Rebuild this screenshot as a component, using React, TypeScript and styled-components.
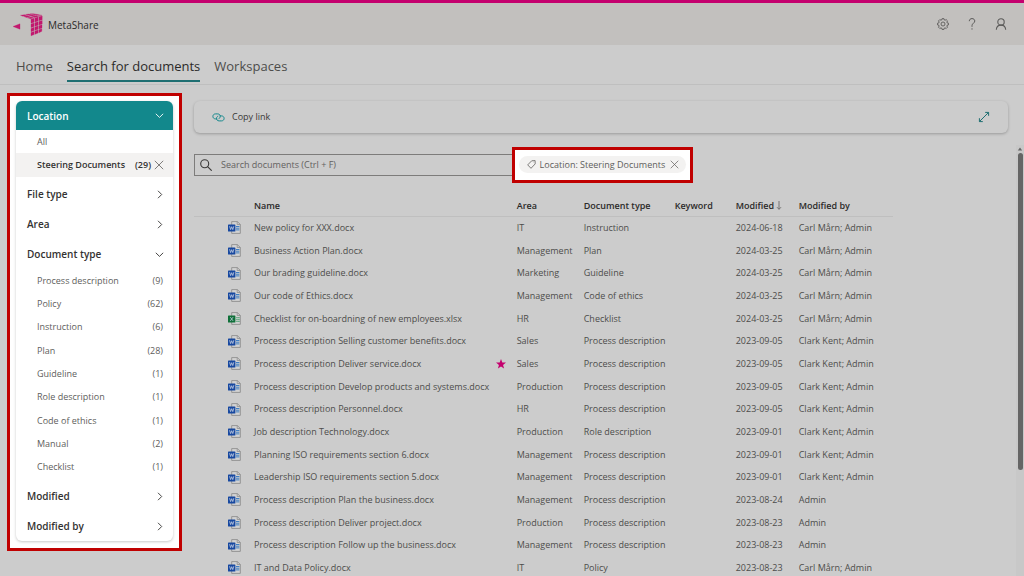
import React, { useState } from 'react';
import styled, { createGlobalStyle, css } from 'styled-components';

const color = {
  page: '#cccccc',
  header: '#c2c0be',
  line: '#bfbfbf',
  magenta: '#c4006e',
  teal: '#12888c',
  tealDark: '#1f6f72',
  text: '#4d4c4b',
  strong: '#2b2a29',
  frame: '#c00000',
};

const GlobalStyle = createGlobalStyle`
  *, *::before, *::after { box-sizing: border-box; }
  body {
    margin: 0;
    background: ${color.page};
    color: ${color.text};
    font-family: 'Open Sans', 'Noto Sans', sans-serif;
    font-size: 9px;
    line-height: 12px;
  }
  button, input { font: inherit; color: inherit; }
  button { border: 0; padding: 0; background: none; text-align: left; }
  a { color: inherit; text-decoration: none; }
  ul { list-style: none; margin: 0; padding: 0; }
  svg { display: block; flex: none; }
`;

const Page = styled.div`
  display: flex;
  flex-direction: column;
  height: 100vh;
  overflow: hidden;
`;

const SuiteBar = styled.header`
  display: flex;
  align-items: center;
  flex: none;
  height: 45px;
  padding: 0 17px 0 13px;
  border-top: 3px solid ${color.magenta};
  background: ${color.header};
`;

const Brand = styled.a`
  display: flex;
  align-items: center;
  gap: 5px;
  padding-top: 2px;
  color: ${color.strong};
  font-size: 10px;
`;

const SuiteActions = styled.div`
  display: flex;
  gap: 17px;
  margin-left: auto;
`;

const IconButton = styled.button`
  display: flex;
`;

const TopNav = styled.nav`
  display: flex;
  align-items: flex-start;
  gap: 14px;
  flex: none;
  height: 40px;
  padding: 12px 16px 0;
  border-bottom: 1px solid ${color.line};
`;

const NavLink = styled.a<{ $current?: boolean }>`
  padding-bottom: 5px;
  border-bottom: 2px solid transparent;
  font-size: 13px;
  line-height: 18px;
  ${(p) =>
    p.$current &&
    css`
      border-color: ${color.tealDark};
      color: ${color.strong};
    `}
`;

const Body = styled.div`
  display: flex;
  align-items: stretch;
  flex: 1;
  min-height: 0;
`;

const SideFrame = styled.aside`
  align-self: flex-start;
  flex: none;
  width: 175px;
  margin: 8px 12px 0 7px;
  padding: 5px 6px 7px;
  border: 3px solid ${color.frame};
  background: #fff;
`;

const FilterPanel = styled.div`
  overflow: hidden;
  border-radius: 6px;
  background: #fff;
  box-shadow: 0 1px 3px rgba(0, 0, 0, 0.22);
`;

const SectionHead = styled.button<{ $active?: boolean }>`
  display: flex;
  align-items: center;
  justify-content: space-between;
  width: 100%;
  height: 30px;
  padding: 0 9px 0 11px;
  color: #333231;
  font-size: 10px;
  font-weight: 600;
  ${(p) =>
    p.$active &&
    css`
      height: 29px;
      background: ${color.teal};
      color: #fff;
    `}
`;

const OptionList = styled.ul`
  display: flex;
  flex-direction: column;
  && { padding-bottom: 2px; }
`;

const OptionItem = styled.li<{ $selected?: boolean }>`
  display: flex;
  align-items: center;
  gap: 3px;
  height: 23px;
  padding: 0 ${(p) => (p.$selected ? 9 : 10)}px 0 21px;
  color: #605e5c;
  &:nth-child(3n) { height: 24px; }
  ${(p) =>
    p.$selected &&
    css`
      height: 24px;
      background: #f3f2f1;
      color: #333231;
      font-weight: 600;
    `}
`;

const OptionButton = styled.button`
  display: flex;
  flex: 1;
  justify-content: space-between;
  white-space: nowrap;
`;

const Main = styled.main`
  display: flex;
  flex-direction: column;
  flex: 1;
  min-width: 0;
  padding-top: 16px;
`;

const CommandBar = styled.div`
  display: flex;
  align-items: center;
  justify-content: space-between;
  flex: none;
  height: 32px;
  margin-right: 16px;
  padding: 0 18px;
  border-radius: 6px;
  box-shadow: 0 1px 3px rgba(0, 0, 0, 0.25);
`;

const Command = styled.button`
  display: flex;
  align-items: center;
  gap: 7px;
  color: #3a3938;
`;

const ScrollArea = styled.div`
  display: flex;
  flex: 1;
  min-height: 0;
  margin-top: 12px;
`;

const Results = styled.section`
  flex: 1;
  min-width: 0;
  overflow: hidden;
  padding-top: 2px;
`;

const ScrollTrack = styled.div`
  display: flex;
  flex-direction: column;
  align-items: center;
  flex: none;
  width: 8px;
  padding-top: 2px;
  background: #c8c8c8;
`;

const ScrollThumb = styled.div`
  width: 5px;
  height: 74%;
  margin-top: 2px;
  border-radius: 3px;
  background: #656565;
`;

const SearchRow = styled.div`
  display: flex;
  align-items: center;
`;

const SearchBox = styled.label`
  display: flex;
  align-items: center;
  gap: 9px;
  width: 39%;
  height: 22px;
  padding: 0 5px;
  border: 1px solid #7d7c7b;
  border-right: 0;
`;

const SearchInput = styled.input`
  flex: 1;
  min-width: 0;
  padding: 0;
  border: 0;
  outline: 0;
  background: transparent;
  &::placeholder { color: #63615f; opacity: 1; }
`;

const ChipFrame = styled.div`
  display: flex;
  align-items: flex-start;
  height: 36px;
  margin-left: -3px;
  padding: 6px 4px;
  border: 3px solid ${color.frame};
  background: #fff;
`;

const Chip = styled.div`
  display: flex;
  align-items: center;
  gap: 4px;
  height: 17px;
  padding: 0 7px 0 8px;
  border-radius: 9px;
  background: #f3f2f1;
  color: #605e5c;
  white-space: nowrap;
`;

const ChipRemove = styled(IconButton)`
  margin-left: 1px;
`;

const DocTable = styled.table`
  width: 85%;
  margin-top: 10px;
  border-collapse: collapse;
  table-layout: fixed;
`;

const HeadRow = styled.tr`
  height: 23px;
  border-bottom: 1px solid ${color.line};
`;

const HeadCell = styled.th`
  padding: 3px 0 0;
  color: ${color.strong};
  font-weight: 600;
  text-align: left;
  white-space: nowrap;
`;

const SortButton = styled.button`
  display: flex;
  align-items: center;
  gap: 2px;
`;

const DocRow = styled.tr`
  height: 23px;
  &:nth-child(3n) { height: 22px; }
`;

const Cell = styled.td`
  padding: 0;
  white-space: nowrap;
`;

const IconCell = styled(Cell)`
  padding-left: 34px;
`;

const Chevron = ({ open }: { open?: boolean }) => (
  <svg width="9" height="9" viewBox="0 0 9 9" fill="none" stroke="currentColor" strokeWidth="0.9">
    <path d={open ? 'M0.8 2.8L4.5 6.4L8.2 2.8' : 'M3 0.8L6.7 4.5L3 8.2'} />
  </svg>
);

const Cross = ({ size }: { size: number }) => (
  <svg width={size} height={size} viewBox="0 0 10 10" fill="none" stroke="#605e5c" strokeWidth="0.8">
    <path d="M0.8 0.8L9.2 9.2M9.2 0.8L0.8 9.2" />
  </svg>
);

const Logo = () => (
  <svg width="30" height="24" viewBox="0 0 30 24" fill="#c2186e" stroke="#c2186e" strokeWidth="0.3">
    <path d="M0 13.5L7 10.8V16.2Z" />
    <path d="M7.5 2.3L11.6 1.7L13.8 2.5L9.9 3.2ZM12.6 1.5L16 1L18.4 1.6L14.8 2.3ZM17.1 0.9L20 0.7L22.6 1.2L19.5 1.5ZM10.9 3.5L14.6 2.8L16.9 3.6L13.4 4.4ZM15.7 2.6L19.3 1.9L22 2.5L18 3.3ZM20.4 1.7L23.8 1.3L29 2.4L23.2 2.3ZM14.5 4.8L18 3.9L20.6 4.8L17.5 5.7ZM19.1 3.6L23 2.7L25.8 3.3L21.7 4.5Z" />
    <path d="M18 6.2L21.2 5.3V9.2L18 10.2ZM22 5L25.1 4.1V8L22 9ZM25.9 3.8L29.2 2.9V6.7L25.9 7.7ZM18 11L21.2 10V13.5L18 14.6ZM22 9.8L25.1 8.8V12.3L22 13.3ZM25.9 8.5L29.2 7.5V10.9L25.9 12ZM18 15.4L21.2 14.3V17.6L18 18.7ZM22 14.1L25.1 13.1V16.3L22 17.3ZM25.9 12.8L29 11.7V14.9L25.9 16ZM18 19.5L21.2 18.4V21.6L18 22.8ZM22 18.1L25.1 17V20L22 21.3ZM25.9 16.8L28.8 15.7V18.3L25.9 19.7Z" />
  </svg>
);

const GearIcon = () => (
  <svg width="12" height="12" viewBox="0 0 12 12" fill="none" stroke="#5b5a59" strokeWidth="0.9">
    <path strokeLinejoin="round" d="M5 0.7H7L7.3 2L8 2.3L9.2 1.6L10.5 2.9L9.8 4.1L10.1 4.8L11.4 5.1V7L10.1 7.3L9.8 8L10.5 9.2L9.2 10.5L8 9.8L7.3 10.1L7 11.4H5L4.7 10.1L4 9.8L2.8 10.5L1.5 9.2L2.2 8L1.9 7.3L0.6 7V5.1L1.9 4.8L2.2 4.1L1.5 2.9L2.8 1.6L4 2.3L4.7 2Z" />
    <circle cx="6" cy="6" r="2" />
  </svg>
);

const HelpIcon = () => (
  <svg width="12" height="12" viewBox="0 0 12 12" fill="none" stroke="#5b5a59" strokeWidth="1">
    <path d="M3.3 3.2C3.3 1.5 4.4 0.6 6 0.6S8.8 1.6 8.8 3C8.8 5 6 5.4 6 7.6V8.8" />
    <path d="M6 10.3V11.6" />
  </svg>
);

const PersonIcon = () => (
  <svg width="12" height="12" viewBox="0 0 12 12" fill="none" stroke="#5b5a59" strokeWidth="1.1">
    <circle cx="6" cy="3.9" r="3.2" />
    <path d="M1.3 11.8C1.5 8.9 3.4 7.1 6 7.1S10.5 8.9 10.7 11.8" />
  </svg>
);

const LinkIcon = () => (
  <svg width="13" height="9" viewBox="0 0 13 9" fill="none" stroke={color.teal} strokeWidth="1">
    <path d="M5.2 5.9H3.6C1.8 5.9 0.9 4.7 0.9 3.4S1.8 0.9 3.6 0.9H5.6C7.4 0.9 8.3 2.1 8.3 3.4C8.3 4.5 7.6 5.4 6.6 5.7" />
    <path d="M7.6 2.9H9.4C11.2 2.9 12.1 4.1 12.1 5.4S11.2 7.9 9.4 7.9H7.2C5.4 7.9 4.5 6.7 4.5 5.4C4.5 4.3 5.2 3.4 6.2 3.1" />
  </svg>
);

const ExpandIcon = () => (
  <svg width="12" height="12" viewBox="0 0 12 12" fill="none" stroke={color.tealDark} strokeWidth="1">
    <path d="M1.4 10.6L10.6 1.4M7.2 1.4H10.6V4.8M1.4 7.2V10.6H4.8" />
  </svg>
);

const SearchIcon = () => (
  <svg width="12" height="12" viewBox="0 0 12 12" fill="none" stroke="#3a3938" strokeWidth="1.1">
    <circle cx="4.7" cy="4.7" r="4" />
    <path d="M7.6 7.6L11.7 11.7" />
  </svg>
);

const TagIcon = () => (
  <svg width="9" height="9" viewBox="0 0 9 9" fill="none" stroke="#605e5c" strokeWidth="0.8" strokeLinejoin="round">
    <path d="M4.7 0.8L8.1 0.6L8.2 3.9L4 8.3L0.7 4.9Z" />
    <path d="M6.6 2.1H6.9" />
  </svg>
);

const SortIcon = () => (
  <svg width="6" height="9" viewBox="0 0 6 9" fill="none" stroke="#6b6a69" strokeWidth="0.9">
    <path d="M3 0V8.2M1 6.2L3 8.3L5 6.2" />
  </svg>
);

const StarIcon = () => (
  <svg width="10" height="10" viewBox="0 0 20 20" fill={color.magenta} aria-label="Favourite">
    <path d="M10 0L12.6 7.2H20L14.1 11.8L16.2 19.2L10 14.8L3.8 19.2L5.9 11.8L0 7.2H7.4Z" />
  </svg>
);

const UpArrow = () => (
  <svg width="6" height="4" viewBox="0 0 6 4" fill="#656565">
    <path d="M3 0.5L5.2 3.5H0.8Z" />
  </svg>
);

const FileIcon = ({ sheet }: { sheet?: boolean }) => (
  <svg width="13" height="13" viewBox="0 0 13 13">
    <path d="M3.7 0.6H9.3L12.3 3.4V12.4H3.7Z" fill="#d2d2d2" stroke="#858585" strokeWidth="0.8" />
    <path d="M9.2 0.7V3.5H12.2" fill="none" stroke="#858585" strokeWidth="0.7" />
    {sheet ? (
      <path d="M8.3 5h1.4v1.2H8.3zM10.2 5h1.4v1.2h-1.4zM8.3 6.9h1.4v1.2H8.3zM10.2 6.9h1.4v1.2h-1.4zM8.3 8.8h1.4V10H8.3zM10.2 8.8h1.4V10h-1.4z" fill="#4fa375" />
    ) : (
      <path d="M8 5.5H11.4M8 7.2H11.4M8 8.9H11.4" stroke="#3f7fc4" strokeWidth="1" />
    )}
    <rect x="0" y="3.4" width="7.4" height="7.2" rx="0.6" fill={sheet ? '#0f7039' : '#1748a0'} />
    <path
      d={sheet ? 'M2.3 5.1L5.1 8.9M5.1 5.1L2.3 8.9' : 'M1.6 5.2L2.6 8.6L3.7 5.7L4.8 8.6L5.8 5.2'}
      fill="none"
      stroke="#c3cde0"
      strokeWidth="0.8"
    />
  </svg>
);

const documentTypes: [string, number][] = [
  ['Process description', 9],
  ['Policy', 62],
  ['Instruction', 6],
  ['Plan', 28],
  ['Guideline', 1],
  ['Role description', 1],
  ['Code of ethics', 1],
  ['Manual', 2],
  ['Checklist', 1],
];

type Doc = [name: string, area: string, type: string, modified: string, by: string, starred?: boolean];

const documents: Doc[] = [
  ['New policy for XXX.docx', 'IT', 'Instruction', '2024-06-18', 'Carl Mårn; Admin'],
  ['Business Action Plan.docx', 'Management', 'Plan', '2024-03-25', 'Carl Mårn; Admin'],
  ['Our brading guideline.docx', 'Marketing', 'Guideline', '2024-03-25', 'Carl Mårn; Admin'],
  ['Our code of Ethics.docx', 'Management', 'Code of ethics', '2024-03-25', 'Carl Mårn; Admin'],
  ['Checklist for on-boardning of new employees.xlsx', 'HR', 'Checklist', '2024-03-25', 'Carl Mårn; Admin'],
  ['Process description Selling customer benefits.docx', 'Sales', 'Process description', '2023-09-05', 'Clark Kent; Admin'],
  ['Process description Deliver service.docx', 'Sales', 'Process description', '2023-09-05', 'Clark Kent; Admin', true],
  ['Process description Develop products and systems.docx', 'Production', 'Process description', '2023-09-05', 'Clark Kent; Admin'],
  ['Process description Personnel.docx', 'HR', 'Process description', '2023-09-05', 'Clark Kent; Admin'],
  ['Job description Technology.docx', 'Production', 'Role description', '2023-09-01', 'Clark Kent; Admin'],
  ['Planning ISO requirements section 6.docx', 'Management', 'Process description', '2023-09-01', 'Clark Kent; Admin'],
  ['Leadership ISO requirements section 5.docx', 'Management', 'Process description', '2023-09-01', 'Clark Kent; Admin'],
  ['Process description Plan the business.docx', 'Management', 'Process description', '2023-08-24', 'Admin'],
  ['Process description Deliver project.docx', 'Production', 'Process description', '2023-08-23', 'Admin'],
  ['Process description Follow up the business.docx', 'Management', 'Process description', '2023-08-23', 'Admin'],
  ['IT and Data Policy.docx', 'IT', 'Policy', '2023-08-23', 'Carl Mårn; Admin'],
];

export default function App() {
  const [query, setQuery] = useState('');

  return (
    <Page>
      <GlobalStyle />
      <SuiteBar>
        <Brand href="#">
          <Logo />
          MetaShare
        </Brand>
        <SuiteActions>
          <IconButton aria-label="Settings"><GearIcon /></IconButton>
          <IconButton aria-label="Help"><HelpIcon /></IconButton>
          <IconButton aria-label="Account"><PersonIcon /></IconButton>
        </SuiteActions>
      </SuiteBar>
      <TopNav>
        <NavLink href="#">Home</NavLink>
        <NavLink href="#" $current aria-current="page">Search for documents</NavLink>
        <NavLink href="#">Workspaces</NavLink>
      </TopNav>
      <Body>
        <SideFrame>
          <FilterPanel>
            <SectionHead $active aria-expanded="true">Location<Chevron open /></SectionHead>
            <OptionList>
              <OptionItem><OptionButton>All</OptionButton></OptionItem>
              <OptionItem $selected>
                <OptionButton><span>Steering Documents</span><span>(29)</span></OptionButton>
                <IconButton aria-label="Clear location"><Cross size={10} /></IconButton>
              </OptionItem>
            </OptionList>
            <SectionHead aria-expanded="false">File type<Chevron /></SectionHead>
            <SectionHead aria-expanded="false">Area<Chevron /></SectionHead>
            <SectionHead aria-expanded="true">Document type<Chevron open /></SectionHead>
            <OptionList>
              {documentTypes.map(([name, count]) => (
                <OptionItem key={name}>
                  <OptionButton><span>{name}</span><span>({count})</span></OptionButton>
                </OptionItem>
              ))}
            </OptionList>
            <SectionHead aria-expanded="false">Modified<Chevron /></SectionHead>
            <SectionHead aria-expanded="false">Modified by<Chevron /></SectionHead>
          </FilterPanel>
        </SideFrame>
        <Main>
          <CommandBar>
            <Command><LinkIcon />Copy link</Command>
            <IconButton aria-label="Expand"><ExpandIcon /></IconButton>
          </CommandBar>
          <ScrollArea>
            <Results>
              <SearchRow>
                <SearchBox>
                  <SearchIcon />
                  <SearchInput
                    type="text"
                    aria-label="Search documents"
                    placeholder="Search documents (Ctrl + F)"
                    value={query}
                    onChange={(e) => setQuery(e.target.value)}
                  />
                </SearchBox>
                <ChipFrame>
                  <Chip>
                    <TagIcon />
                    Location: Steering Documents
                    <ChipRemove aria-label="Remove filter"><Cross size={9} /></ChipRemove>
                  </Chip>
                </ChipFrame>
              </SearchRow>
              <DocTable>
                <colgroup>
                  <col width="60" />
                  <col />
                  <col width="21" />
                  <col width="67" />
                  <col width="91" />
                  <col width="61" />
                  <col width="63" />
                  <col width="94" />
                </colgroup>
                <thead>
                  <HeadRow>
                    <HeadCell />
                    <HeadCell>Name</HeadCell>
                    <HeadCell />
                    <HeadCell>Area</HeadCell>
                    <HeadCell>Document type</HeadCell>
                    <HeadCell>Keyword</HeadCell>
                    <HeadCell><SortButton>Modified<SortIcon /></SortButton></HeadCell>
                    <HeadCell>Modified by</HeadCell>
                  </HeadRow>
                </thead>
                <tbody>
                  {documents.map(([name, area, type, modified, by, starred]) => (
                    <DocRow key={name}>
                      <IconCell><FileIcon sheet={name.endsWith('.xlsx')} /></IconCell>
                      <Cell><a href="#">{name}</a></Cell>
                      <Cell>{starred && <StarIcon />}</Cell>
                      <Cell>{area}</Cell>
                      <Cell>{type}</Cell>
                      <Cell />
                      <Cell>{modified}</Cell>
                      <Cell>{by}</Cell>
                    </DocRow>
                  ))}
                </tbody>
              </DocTable>
            </Results>
            <ScrollTrack>
              <UpArrow />
              <ScrollThumb />
            </ScrollTrack>
          </ScrollArea>
        </Main>
      </Body>
    </Page>
  );
}
